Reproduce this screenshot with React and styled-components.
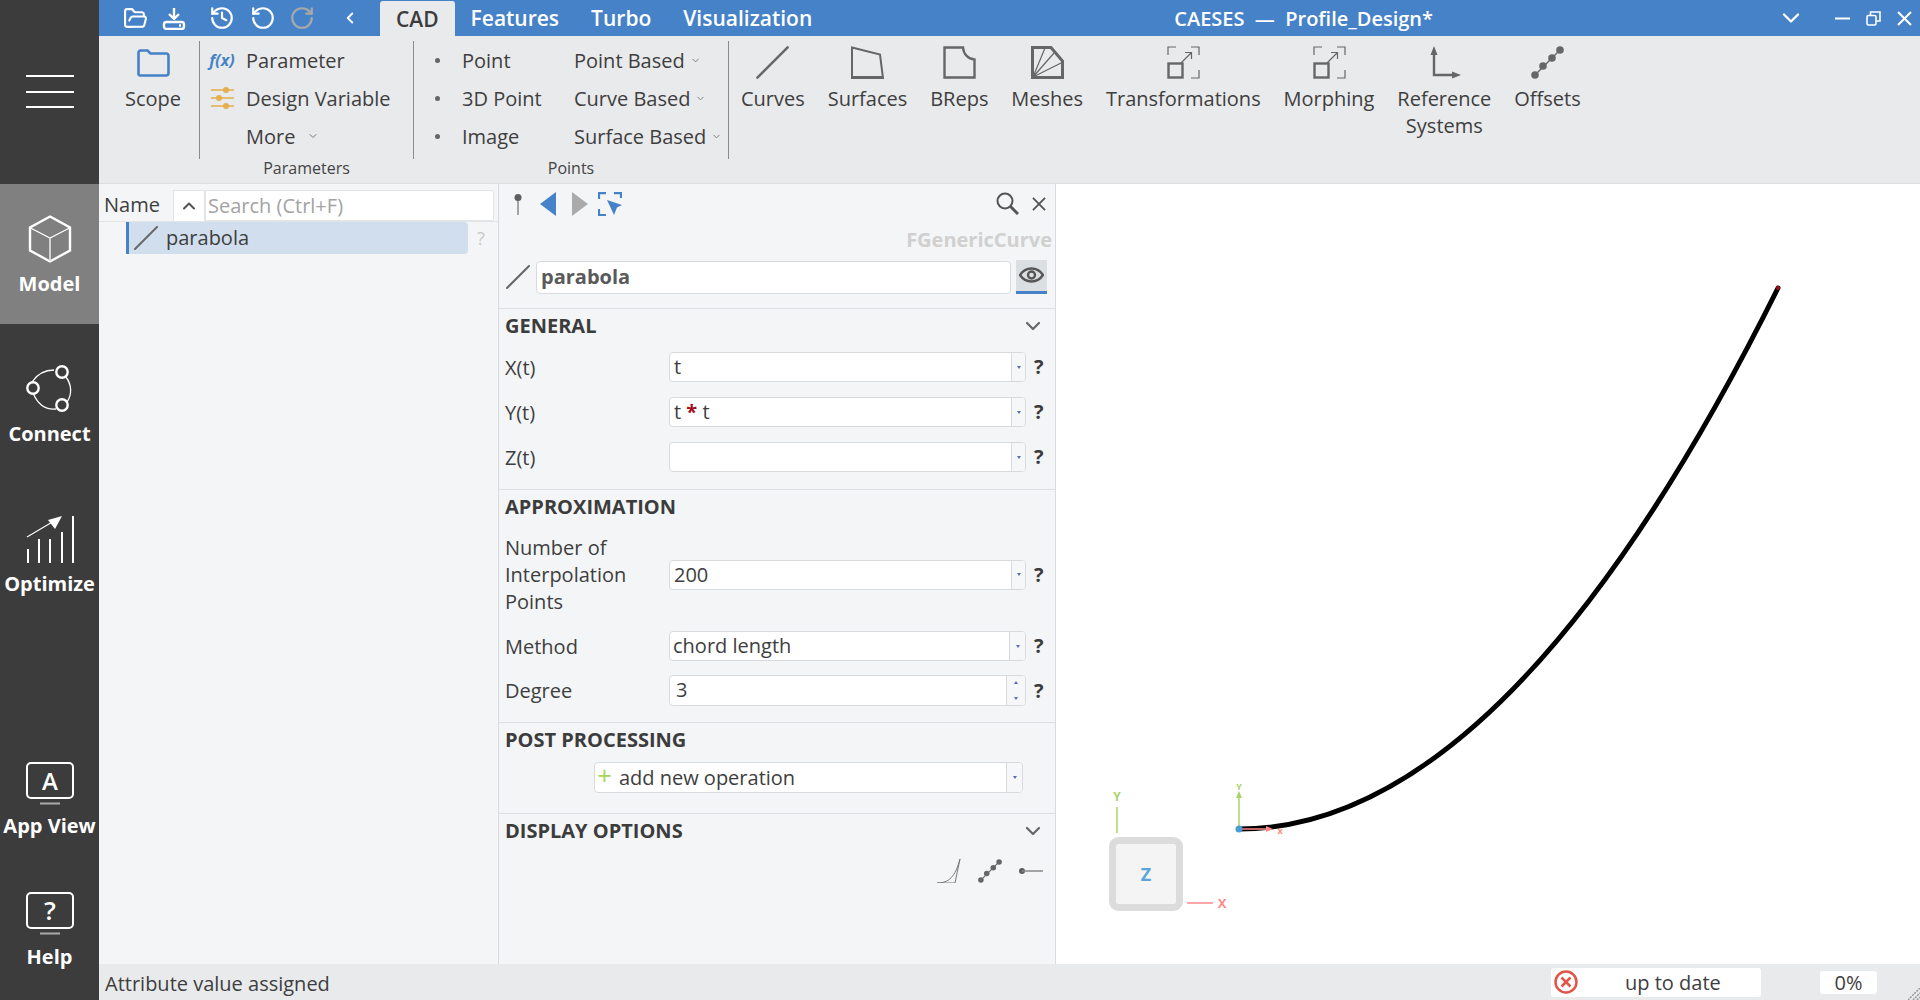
import React from "react";
import styled, { createGlobalStyle } from "styled-components";
import { FolderOpen, History, RotateCcw, RotateCw, ChevronLeft, ChevronDown, ChevronUp } from "lucide-react";

const GlobalStyle = createGlobalStyle`
  html, body {
    margin: 0;
    padding: 0;
    overflow: hidden;
  }
  * {
    box-sizing: border-box;
  }
  body {
    font-family: "Open Sans", "Liberation Sans", sans-serif;
    font-size: 20px;
    color: #3e3e3e;
  }
`;

const AppShell = styled.div`
  display: flex;
  width: 1920px;
  height: 1000px;
  overflow: hidden;
  background: #fff;
`;

/* left nav */
const Sidebar = styled.nav`
  display: flex;
  flex-direction: column;
  flex: none;
  width: 99px;
  height: 1000px;
  background: #3c3c3c;
  color: #fff;
`;

const MenuBox = styled.div`
  display: flex;
  flex-direction: column;
  align-items: center;
  gap: 13.5px;
  height: 184px;
  padding-top: 75px;
`;

const MenuLine = styled.span`
  width: 48px;
  height: 2px;
  background: #fff;
`;

const NavItem = styled.div`
  display: flex;
  flex-direction: column;
  align-items: center;
  height: ${(p) => p.$height}px;
  padding-top: ${(p) => p.$top || 0}px;
  background: ${(p) => (p.$active ? "#808080" : "transparent")};
`;

const NavLabel = styled.span`
  margin-top: ${(p) => p.$gap}px;
  font-size: 20px;
  font-weight: 700;
  line-height: 24px;
  white-space: nowrap;
`;

const NavBottom = styled.div`
  margin-top: auto;
`;

const ScreenSvg = styled.svg`
  overflow: visible;
`;

const ScreenGlyph = styled.text`
  font-family: "Open Sans", sans-serif;
  font-size: ${(p) => p.$size}px;
  font-weight: 600;
  fill: #fff;
  text-anchor: middle;
`;

/* main column */
const Main = styled.div`
  display: flex;
  flex-direction: column;
  flex: 1;
  min-width: 0;
`;

const TitleBar = styled.header`
  display: flex;
  align-items: flex-end;
  flex: none;
  height: 36px;
  background: #4682c8;
  color: #fff;
`;

const QuickTools = styled.div`
  display: flex;
  align-items: center;
  width: 281px;
  height: 36px;
  padding-left: 23px;
`;

const QuickSlot = styled.span`
  display: flex;
  justify-content: center;
  flex: none;
  width: ${(p) => p.$w}px;
  margin-right: ${(p) => p.$mr || 0}px;
  color: ${(p) => p.$color || "#fff"};
`;

const Tab = styled.div`
  height: ${(p) => (p.$active ? 35 : 36)}px;
  padding: 0 16px;
  border-radius: 3px 3px 0 0;
  background: ${(p) => (p.$active ? "#e9eaec" : "transparent")};
  color: ${(p) => (p.$active ? "#3c3c3c" : "#fff")};
  font-size: 21px;
  font-weight: 600;
  line-height: 36px;
`;

const AppTitle = styled.div`
  margin-left: 346px;
  font-size: 20px;
  font-weight: 600;
  line-height: 35px;
  white-space: pre;
`;

const WindowButtons = styled.div`
  display: flex;
  align-items: center;
  gap: 16px;
  height: 36px;
  margin-left: auto;
  padding-right: 8px;
`;

const Ribbon = styled.section`
  display: flex;
  flex: none;
  height: 148px;
  padding-top: 5px;
  background: #e9eaec;
  border-bottom: 1px solid #dcdee0;
`;

const ScopeGroup = styled.div`
  width: 100px;
  padding-left: 26px;
`;

const RibbonDivider = styled.div`
  flex: none;
  width: 1px;
  height: 118px;
  background: #8c8c8c;
`;

const RibbonGroup = styled.div`
  display: flex;
  flex-direction: column;
  flex: none;
  width: ${(p) => p.$width}px;
`;

const GroupBody = styled.div`
  display: grid;
  grid-template-columns: ${(p) => p.$cols};
  grid-auto-rows: 38px;
  height: 115px;
  padding-left: ${(p) => p.$left}px;
`;

const GroupTitle = styled.div`
  font-size: 16px;
  line-height: 24px;
  text-align: center;
  color: #444;
`;

const RibbonRow = styled.div`
  display: flex;
  align-items: center;
  font-size: 20px;
  white-space: nowrap;
`;

const RowIcon = styled.span`
  display: flex;
  justify-content: center;
  flex: none;
  width: 26px;
  margin-right: 11px;
`;

const FxMark = styled.span`
  color: #4682c8;
  font-size: 16px;
  font-style: italic;
  font-weight: 700;
`;

const Bullet = styled.span`
  flex: none;
  width: 5px;
  height: 5px;
  margin-right: 22px;
  border-radius: 50%;
  background: #666;
`;

const Caret = styled(ChevronDown)`
  flex: none;
  margin-left: ${(p) => p.$gap}px;
  color: #777;
`;

const ToolStrip = styled.div`
  display: flex;
  gap: 22.9px;
  padding-left: 12px;
`;

const ToolButton = styled.div`
  display: flex;
  flex-direction: column;
  align-items: center;
  width: max-content;
  padding-top: 5px;
  font-size: 20px;
  line-height: 27px;
  text-align: center;
  white-space: nowrap;
`;

const ToolIcon = styled.span`
  display: flex;
  align-items: center;
  height: 33px;
  margin-bottom: 6px;
`;

/* content */
const Content = styled.div`
  display: flex;
  flex: 1;
  min-height: 0;
`;

const TreePanel = styled.aside`
  flex: none;
  width: 399px;
  background: #f3f5f7;
`;

const TreeHeader = styled.div`
  display: flex;
  align-items: flex-end;
  height: 38px;
  border-bottom: 1px solid #e2e4e7;
`;

const NameCell = styled.span`
  width: 74px;
  padding-left: 5px;
  font-size: 20px;
  line-height: 33px;
`;

const SortButton = styled.span`
  display: flex;
  align-items: center;
  justify-content: center;
  width: 32px;
  height: 31px;
  background: #fff;
  border: 1px solid #e2e4e7;
  border-bottom: none;
  color: #555;
`;

const SearchBox = styled.div`
  width: 289px;
  height: 31px;
  padding-left: 2px;
  background: #fff;
  border: 1px solid #e2e4e7;
  border-radius: 0 3px 0 0;
  color: #a3a3a3;
  font-size: 20px;
  line-height: 29px;
`;

const TreeRow = styled.div`
  display: flex;
  align-items: center;
  gap: 8px;
  height: 32px;
  margin: 0 0 0 27px;
`;

const TreeItem = styled.div`
  display: flex;
  align-items: center;
  gap: 8px;
  width: 342px;
  height: 32px;
  padding-left: 5px;
  background: #d1deed;
  border-left: 3px solid #4682c8;
  border-radius: 0 4px 4px 0;
  font-size: 20px;
  line-height: 28px;
`;

const TreeHelp = styled.span`
  margin-left: 1px;
  color: #c9c9c9;
  font-size: 18px;
`;

const DetailPanel = styled.section`
  flex: none;
  width: 558px;
  background: #f3f5f7;
  border-left: 1px solid #d8dadd;
  border-right: 1px solid #d8dadd;
`;

const DetailTools = styled.div`
  display: flex;
  align-items: center;
  height: 40px;
  padding: 0 9px 1px 13px;
`;

const DetailSlot = styled.span`
  display: flex;
  flex: none;
  margin-right: ${(p) => p.$mr || 0}px;
  margin-left: ${(p) => (p.$push ? "auto" : 0)};
`;

const TypeName = styled.div`
  margin-top: 4px;
  padding-right: 3px;
  color: #d0d0d0;
  font-size: 20px;
  font-weight: 700;
  line-height: 24px;
  text-align: right;
`;

const NameRow = styled.div`
  display: flex;
  align-items: center;
  height: 34px;
  margin-top: 8px;
  padding-left: 7px;
`;

const NameInput = styled.div`
  flex: none;
  width: 475px;
  height: 33px;
  margin-left: 6px;
  padding-left: 4px;
  background: #fff;
  border: 1px solid #d8dadd;
  border-radius: 4px;
  color: #5a5a5a;
  font-size: 20px;
  font-weight: 700;
  line-height: 29px;
`;

const EyeButton = styled.span`
  display: flex;
  align-items: center;
  justify-content: center;
  width: 31px;
  height: 34px;
  margin-left: 5px;
  padding-bottom: 2px;
  background: #dcdfe2;
  border-bottom: 3px solid #4682c8;
`;

const Section = styled.div`
  margin-top: ${(p) => p.$gap || 0}px;
  padding: 5px 0 ${(p) => p.$bottom || 0}px;
  border-top: 1px solid #dcdee1;
`;

const SectionHead = styled.div`
  display: flex;
  align-items: center;
  justify-content: space-between;
  height: 24px;
  padding: 0 10px 0 6px;
  color: #3c3c3c;
  font-size: 20px;
  font-weight: 700;
  line-height: 22px;
`;

const FieldList = styled.div`
  display: flex;
  flex-direction: column;
  gap: 15px;
  margin-top: ${(p) => p.$top}px;
`;

const FieldRow = styled.div`
  display: grid;
  grid-template-columns: 164px 357px auto;
  align-items: center;
  margin-top: ${(p) => p.$shift || 0}px;
  padding-left: 6px;
`;

const FieldLabel = styled.span`
  font-size: 20px;
  line-height: 27px;
`;

const FieldBox = styled.div`
  display: flex;
  height: ${(p) => p.$height || 30}px;
  background: #fff;
  border: 1px solid #d8dadd;
  border-radius: 4px;
  font-size: 20px;
  line-height: ${(p) => (p.$height || 30) - 3}px;
`;

const FieldValue = styled.span`
  flex: 1;
  min-width: 0;
  padding-left: ${(p) => p.$left || 4}px;
  white-space: pre;
`;

const Operator = styled.span`
  color: #a01020;
  font-weight: 700;
`;

const Arrows = styled.span`
  display: flex;
  flex-direction: column;
  align-items: center;
  justify-content: ${(p) => (p.$spin ? "space-between" : "center")};
  flex: none;
  width: ${(p) => p.$width}px;
  padding: ${(p) => (p.$spin ? "5px 0" : 0)};
  background: #f6f7f8;
  border-left: 1px solid #d8dadd;
  border-radius: 0 3px 3px 0;
`;

const ArrowDown = styled.span`
  width: 0;
  height: 0;
  border-left: 2.5px solid transparent;
  border-right: 2.5px solid transparent;
  border-top: 3px solid #5b6ab8;
`;

const ArrowUp = styled(ArrowDown)`
  border-top: none;
  border-bottom: 3px solid #5b6ab8;
`;

const HelpMark = styled.span`
  margin-left: 8px;
  color: #3c3c3c;
  font-size: 20px;
  font-weight: 700;
  line-height: 24px;
`;

const AddRow = styled.div`
  width: 429px;
  margin: 10px 0 0 95px;
`;

const PlusMark = styled.span`
  margin-right: 7px;
  margin-left: -1px;
  color: #a4d65e;
  font-size: 26px;
  line-height: 24px;
`;

const DisplayIcons = styled.div`
  display: flex;
  align-items: center;
  justify-content: flex-end;
  gap: 17px;
  margin-top: 16px;
  padding-right: 12px;
`;

const Viewport = styled.div`
  flex: 1;
  min-width: 0;
  background: #fff;
`;

const CanvasSvg = styled.svg`
  display: block;
  width: 100%;
  height: 100%;
`;

const AxisText = styled.text`
  font-family: "Open Sans", sans-serif;
  font-weight: 700;
  font-size: ${(p) => p.$size}px;
  fill: ${(p) => p.$fill};
  text-anchor: middle;
`;

/* status bar */
const StatusBar = styled.footer`
  position: relative;
  display: flex;
  align-items: center;
  flex: none;
  height: 36px;
  padding-left: 6px;
  padding-top: 2px;
  background: #e9eaec;
  font-size: 20px;
`;

const StatusBox = styled.div`
  display: flex;
  align-items: center;
  width: 210px;
  height: 29px;
  margin-left: auto;
  margin-top: -2px;
  padding-left: 3px;
  background: #fff;
  border-radius: 3px;
`;

const StatusText = styled.span`
  margin-left: 47px;
`;

const PercentBox = styled.div`
  width: 57px;
  height: 23px;
  margin: -2px 43px 0 59px;
  background: #fff;
  border-radius: 3px;
  line-height: 23px;
  text-align: center;
`;

const Grip = styled.svg`
  position: absolute;
  right: 0;
  bottom: 0;
`;

const ic = { fill: "none", stroke: "#666" };

const LineIcon = ({ size = 24, width = 2 }) => (
  <svg width={size} height={size} viewBox="0 0 24 24">
    <path d="M1 23 23 1" stroke="#666" strokeWidth={width} strokeLinecap="round" />
  </svg>
);

const CrossIcon = ({ size, color, width = 2 }) => (
  <svg width={size} height={size} viewBox="0 0 15 15">
    <path d="M1 1 14 14M14 1 1 14" stroke={color} strokeWidth={width} />
  </svg>
);

const SaveIcon = () => (
  <svg width="24" height="23" viewBox="0 0 24 23" fill="none" stroke="#fff" strokeWidth="2.4">
    <path d="M12 1v10M7 7l5 5 5-5" strokeLinejoin="round" />
    <rect x="2" y="15" width="20" height="7" rx="2.5" />
    <path d="M17 18.5h2" />
  </svg>
);

const ScopeFolder = () => (
  <svg width="33" height="28" viewBox="0 0 33 28" fill="none" stroke="#4682c8" strokeWidth="2.6">
    <path d="M1.5 25V3.5a2 2 0 0 1 2-2h7l3 3h15.5a2.5 2.5 0 0 1 2.5 2.5V24a2.5 2.5 0 0 1-2.5 2.5H3a1.5 1.5 0 0 1-1.5-1.5Z" />
  </svg>
);

const SlidersIcon = () => (
  <svg width="25" height="24" viewBox="0 0 25 24" stroke="#e3b04b" strokeWidth="1.6" fill="#e3b04b">
    <path d="M1 4h23M1 12h23M1 20h23" />
    <circle cx="16" cy="4" r="2.2" />
    <circle cx="9" cy="12" r="2.2" />
    <circle cx="16" cy="20" r="2.2" />
  </svg>
);

const SurfaceIcon = () => (
  <svg width="33" height="33" viewBox="0 0 33 33" {...ic}>
    <path d="M1 1.5 29 8.5 32 32H1Z" strokeWidth="2" />
    <path d="M1 31.5H32" strokeWidth="3" />
  </svg>
);

const BrepIcon = () => (
  <svg width="33" height="33" viewBox="0 0 33 33" {...ic} strokeWidth="2.4">
    <path d="M1.5 1.5H20C20.5 8 25 13 31.5 13.5V31.5H1.5Z" />
  </svg>
);

const MeshIcon = () => (
  <svg width="33" height="33" viewBox="0 0 33 33" {...ic}>
    <path d="M1.5 1.5H20L31.5 15V31.5H1.5Z" strokeWidth="3" />
    <path d="M2 31 14 2M2 31 23 7M2 31 30 17" strokeWidth="1.2" />
  </svg>
);

const TransformIcon = () => (
  <svg width="33" height="33" viewBox="0 0 33 33" {...ic}>
    <path d="M1 9V1h8M24 1h8v8M32 24v8h-8" strokeWidth="1.2" />
    <rect x="1.5" y="17.5" width="14" height="14" strokeWidth="2.4" />
    <path d="M14 17 24 7M18 6.5h6.5V13" strokeWidth="1.2" />
  </svg>
);

const AxesIcon = () => (
  <svg width="33" height="33" viewBox="0 0 33 33">
    <path d="M6 5V29H27" {...ic} strokeWidth="2.4" />
    <path d="M6 0 9.5 9H2.5ZM33 29 24 32.5V25.5Z" fill="#666" />
  </svg>
);

const DotsIcon = ({ size = 33 }) => (
  <svg width={size} height={size} viewBox="0 0 33 33" fill="#666">
    <path d="M4 29 29 4" stroke="#666" strokeWidth="1.5" />
    <circle cx="4" cy="29" r="3.8" />
    <circle cx="12" cy="20" r="3.8" />
    <circle cx="21" cy="12" r="3.8" />
    <circle cx="29" cy="4" r="3.8" />
  </svg>
);

const PinIcon = () => (
  <svg width="12" height="22" viewBox="0 0 12 22">
    <path d="M6 6V22" stroke="#888" strokeWidth="1.5" />
    <circle cx="6" cy="4.5" r="3.5" fill="#5e5e5e" />
  </svg>
);

const TriangleIcon = ({ dir, color }) => (
  <svg width="17" height="24" viewBox="0 0 17 24">
    <path d={dir === "left" ? "M0 12 16 0V24Z" : "M1 0 17 12 1 24Z"} fill={color} />
  </svg>
);

const SelectFrameIcon = () => (
  <svg width="24" height="24" viewBox="0 0 24 24" fill="none" stroke="#4682c8" strokeWidth="2.2">
    <path d="M1 7V1.1H8M16 1.1H23V6M1 17V23H8" />
    <path d="M9 8 24 13 19 15.5 16 23Z" fill="#4682c8" stroke="none" />
  </svg>
);

const LensIcon = () => (
  <svg width="23" height="23" viewBox="0 0 23 23" fill="none" stroke="#555">
    <circle cx="9" cy="9" r="7.5" strokeWidth="2" />
    <path d="M14.5 14.5 22 22" strokeWidth="3" />
  </svg>
);

const EyeIcon = () => (
  <svg width="25" height="16" viewBox="0 0 25 16">
    <path d="M1 8C4 3.5 8 1.5 12.5 1.5S21 3.5 24 8C21 12.5 17 14.5 12.5 14.5S4 12.5 1 8Z" fill="none" stroke="#555" strokeWidth="2.4" />
    <circle cx="12.5" cy="8" r="3.5" fill="none" stroke="#555" strokeWidth="2.4" />
  </svg>
);

const CubeIcon = () => (
  <svg width="44" height="48" viewBox="0 0 44 48" fill="none" stroke="#fff">
    <path d="M22 1.5 42 12.5V35.5L22 46.5 2 35.5V12.5Z" strokeWidth="2.4" />
    <path d="M2.5 13 22 23 41.5 13" strokeWidth="1.2" />
    <path d="M22 23V46" stroke="#ddd" strokeWidth="1.8" />
  </svg>
);

const ConnectIcon = () => (
  <svg width="48" height="48" viewBox="0 0 48 48" fill="none" stroke="#fff">
    <path d="M6 17C12 8 20 5 28 5M40 12C46 20 46 30 41 37M30 44C20 45 12 40 7 28" strokeWidth="1.3" />
    <circle cx="7" cy="23" r="5.7" strokeWidth="2.4" />
    <circle cx="36" cy="7" r="5.7" strokeWidth="2.4" />
    <circle cx="36" cy="40" r="5.7" strokeWidth="2.4" />
  </svg>
);

const OptimizeIcon = () => (
  <svg width="48" height="48" viewBox="0 0 48 48" fill="none" stroke="#fff">
    <path d="M2 48V34M13 48V24M24 48V24M36 48V17M47 48V1" strokeWidth="2" />
    <path d="M1 22 28 6" strokeWidth="1.2" />
    <path d="M36 1 22 5 29 14Z" fill="#fff" stroke="none" />
  </svg>
);

const ScreenIcon = ({ children, size }) => (
  <ScreenSvg width="48" height="43" viewBox="0 0 48 43">
    <rect x="1" y="1" width="46" height="35" rx="4" fill="none" stroke="#fff" strokeWidth="2" />
    <path d="M14 41.5H34" stroke="#aaa" strokeWidth="2" />
    <ScreenGlyph x="24" y="28" $size={size}>{children}</ScreenGlyph>
  </ScreenSvg>
);

const CurveOptionIcon = () => (
  <svg width="24" height="24" viewBox="0 0 24 24" fill="none" stroke="#777" strokeWidth="1">
    <path d="M0 24C12 24 18 18 23 0L18 24H0" />
  </svg>
);

const StubIcon = () => (
  <svg width="24" height="12" viewBox="0 0 24 12">
    <circle cx="3" cy="6" r="3" fill="#5e5e5e" />
    <path d="M3 6H24" stroke="#888" strokeWidth="1.5" />
  </svg>
);

const ErrorIcon = () => (
  <svg width="24" height="24" viewBox="0 0 24 24" fill="none" stroke="#e0564a" strokeWidth="2.5">
    <circle cx="12" cy="12" r="10.5" />
    <path d="M7.5 7.5 16.5 16.5M16.5 7.5 7.5 16.5" />
  </svg>
);

const tools = [
  { label: "Curves", icon: <LineIcon size={33} width={1.8} /> },
  { label: "Surfaces", icon: <SurfaceIcon /> },
  { label: "BReps", icon: <BrepIcon /> },
  { label: "Meshes", icon: <MeshIcon /> },
  { label: "Transformations", icon: <TransformIcon /> },
  { label: "Morphing", icon: <TransformIcon /> },
  { label: "Reference", extra: "Systems", icon: <AxesIcon /> },
  { label: "Offsets", icon: <DotsIcon /> },
];

const Field = ({ label, value, arrowWidth = 14, left, shift }) => (
  <FieldRow $shift={shift}>
    <FieldLabel>{label}</FieldLabel>
    <FieldBox>
      <FieldValue $left={left}>{value}</FieldValue>
      <Arrows $width={arrowWidth}>
        <ArrowDown />
      </Arrows>
    </FieldBox>
    <HelpMark>?</HelpMark>
  </FieldRow>
);

// viewport is a canvas: coordinates are relative to its top left corner
const ViewportCanvas = () => (
  <CanvasSvg viewBox="0 0 864 780" preserveAspectRatio="xMinYMin">
    <path d="M183 645Q452.5 645 722 104" fill="none" stroke="#000" strokeWidth="5" strokeLinecap="round" />
    <circle cx="722" cy="104" r="2" fill="#a01010" />

    <rect x="56.5" y="656.5" width="67" height="67" rx="6" fill="#f4f4f4" stroke="#dcdcdc" strokeWidth="7" />
    <AxisText x="90" y="697" $size={18} $fill="#5ba4d8">Z</AxisText>
    <path d="M61 623V649" stroke="#a8d468" strokeWidth="1.5" />
    <AxisText x="61" y="617" $size={12} $fill="#a8d468">Y</AxisText>
    <path d="M131 719H157" stroke="#ff8a8a" strokeWidth="1.5" />
    <AxisText x="166" y="724" $size={13} $fill="#ff8a8a">X</AxisText>

    <path d="M183 645V612" stroke="#a8d468" strokeWidth="1.5" />
    <path d="M183 607 186 614H180Z" fill="#a8d468" />
    <AxisText x="183" y="606" $size={9} $fill="#a8d468">Y</AxisText>
    <path d="M183 645H212" stroke="#ff8a8a" strokeWidth="1.5" />
    <path d="M217 645 210 642V648Z" fill="#ff8a8a" />
    <AxisText x="224" y="650" $size={9} $fill="#ff8a8a">x</AxisText>
    <circle cx="183" cy="645" r="3.5" fill="#4b9bd5" />
  </CanvasSvg>
);

const App = () => (
  <AppShell>
    <GlobalStyle />
    <Sidebar>
      <MenuBox>
        <MenuLine />
        <MenuLine />
        <MenuLine />
      </MenuBox>
      <NavItem $active $height={140} $top={31}>
        <CubeIcon />
        <NavLabel $gap={9}>Model</NavLabel>
      </NavItem>
      <NavItem $height={150} $top={41}>
        <ConnectIcon />
        <NavLabel $gap={9}>Connect</NavLabel>
      </NavItem>
      <NavItem $height={130} $top={41}>
        <OptimizeIcon />
        <NavLabel $gap={9}>Optimize</NavLabel>
      </NavItem>
      <NavBottom>
        <NavItem $height={130}>
          <ScreenIcon size={24}>A</ScreenIcon>
          <NavLabel $gap={9}>App View</NavLabel>
        </NavItem>
        <NavItem $height={108}>
          <ScreenIcon size={26}>?</ScreenIcon>
          <NavLabel $gap={10}>Help</NavLabel>
        </NavItem>
      </NavBottom>
    </Sidebar>

    <Main>
      <TitleBar>
        <QuickTools>
          <QuickSlot $w={26} $mr={14}><FolderOpen size={25} strokeWidth={2} /></QuickSlot>
          <QuickSlot $w={24} $mr={23}><SaveIcon /></QuickSlot>
          <QuickSlot $w={26} $mr={15}><History size={26} strokeWidth={2} /></QuickSlot>
          <QuickSlot $w={26} $mr={13}><RotateCcw size={26} strokeWidth={2} /></QuickSlot>
          <QuickSlot $w={26} $mr={26} $color="#a9a9a9"><RotateCw size={26} strokeWidth={2} /></QuickSlot>
          <QuickSlot $w={18}><ChevronLeft size={20} strokeWidth={2.5} /></QuickSlot>
        </QuickTools>
        <Tab $active>CAD</Tab>
        <Tab>Features</Tab>
        <Tab>Turbo</Tab>
        <Tab>Visualization</Tab>
        <AppTitle>CAESES  —  Profile_Design*</AppTitle>
        <WindowButtons>
          <ChevronDown size={28} strokeWidth={2} />
          <svg width="15" height="15" viewBox="0 0 15 15" style={{ marginLeft: 14 }}>
            <path d="M0 7.5H15" stroke="#fff" strokeWidth="2" />
          </svg>
          <svg width="15" height="15" viewBox="0 0 15 15" fill="none" stroke="#fff" strokeWidth="1.6">
            <rect x="1" y="4.5" width="9" height="9.5" rx="1.5" />
            <path d="M4.5 4V1h9.5v9h-3.5" />
          </svg>
          <CrossIcon size={15} color="#fff" />
        </WindowButtons>
      </TitleBar>

      <Ribbon>
        <ScopeGroup>
          <ToolButton>
            <ToolIcon><ScopeFolder /></ToolIcon>
            Scope
          </ToolButton>
        </ScopeGroup>
        <RibbonDivider />
        <RibbonGroup $width={213}>
          <GroupBody $cols="1fr" $left={9}>
            <RibbonRow><RowIcon><FxMark>f(x)</FxMark></RowIcon>Parameter</RibbonRow>
            <RibbonRow><RowIcon><SlidersIcon /></RowIcon>Design Variable</RibbonRow>
            <RibbonRow><RowIcon />More<Caret size={12} $gap={12} /></RibbonRow>
          </GroupBody>
          <GroupTitle>Parameters</GroupTitle>
        </RibbonGroup>
        <RibbonDivider />
        <RibbonGroup $width={314}>
          <GroupBody $cols="139px 1fr" $left={21}>
            <RibbonRow><Bullet />Point</RibbonRow>
            <RibbonRow>Point Based<Caret size={11} $gap={5} /></RibbonRow>
            <RibbonRow><Bullet />3D Point</RibbonRow>
            <RibbonRow>Curve Based<Caret size={11} $gap={5} /></RibbonRow>
            <RibbonRow><Bullet />Image</RibbonRow>
            <RibbonRow>Surface Based<Caret size={11} $gap={5} /></RibbonRow>
          </GroupBody>
          <GroupTitle>Points</GroupTitle>
        </RibbonGroup>
        <RibbonDivider />
        <ToolStrip>
          {tools.map((tool) => (
            <ToolButton key={tool.label}>
              <ToolIcon>{tool.icon}</ToolIcon>
              {tool.label}
              {tool.extra ? <span>{tool.extra}</span> : null}
            </ToolButton>
          ))}
        </ToolStrip>
      </Ribbon>

      <Content>
        <TreePanel>
          <TreeHeader>
            <NameCell>Name</NameCell>
            <SortButton><ChevronUp size={20} strokeWidth={2.5} /></SortButton>
            <SearchBox>Search (Ctrl+F)</SearchBox>
          </TreeHeader>
          <TreeRow>
            <TreeItem>
              <LineIcon />
              parabola
            </TreeItem>
            <TreeHelp>?</TreeHelp>
          </TreeRow>
        </TreePanel>

        <DetailPanel>
          <DetailTools>
            <DetailSlot $mr={16}><PinIcon /></DetailSlot>
            <DetailSlot $mr={14}><TriangleIcon dir="left" color="#4682c8" /></DetailSlot>
            <DetailSlot $mr={10}><TriangleIcon dir="right" color="#aaa" /></DetailSlot>
            <DetailSlot><SelectFrameIcon /></DetailSlot>
            <DetailSlot $push $mr={13}><LensIcon /></DetailSlot>
            <DetailSlot><CrossIcon size={14} color="#555" /></DetailSlot>
          </DetailTools>
          <TypeName>FGenericCurve</TypeName>
          <NameRow>
            <LineIcon />
            <NameInput>parabola</NameInput>
            <EyeButton><EyeIcon /></EyeButton>
          </NameRow>
          <Section $gap={14} $bottom={17}>
            <SectionHead>GENERAL<ChevronDown size={24} color="#666" strokeWidth={2.2} /></SectionHead>
            <FieldList $top={14}>
              <Field label="X(t)" value="t" />
              <Field label="Y(t)" value={<>t <Operator>*</Operator> t</>} />
              <Field label="Z(t)" value="" />
            </FieldList>
          </Section>
          <Section $bottom={16}>
            <SectionHead>APPROXIMATION</SectionHead>
            <FieldList $top={15}>
              <Field label={<>Number of<br />Interpolation<br />Points</>} value="200" />
              <Field label="Method" value="chord length" arrowWidth={16} left={3} shift={1} />
              <FieldRow $shift={-1}>
                <FieldLabel>Degree</FieldLabel>
                <FieldBox $height={31}>
                  <FieldValue $left={6}>3</FieldValue>
                  <Arrows $width={19} $spin>
                    <ArrowUp />
                    <ArrowDown />
                  </Arrows>
                </FieldBox>
                <HelpMark>?</HelpMark>
              </FieldRow>
            </FieldList>
          </Section>
          <Section $bottom={20}>
            <SectionHead>POST PROCESSING</SectionHead>
            <AddRow>
              <FieldBox $height={31}>
                <FieldValue $left={3}><PlusMark>+</PlusMark>add new operation</FieldValue>
                <Arrows $width={16}>
                  <ArrowDown />
                </Arrows>
              </FieldBox>
            </AddRow>
          </Section>
          <Section>
            <SectionHead>DISPLAY OPTIONS<ChevronDown size={24} color="#666" strokeWidth={2.2} /></SectionHead>
            <DisplayIcons>
              <CurveOptionIcon />
              <DotsIcon size={24} />
              <StubIcon />
            </DisplayIcons>
          </Section>
        </DetailPanel>

        <Viewport>
          <ViewportCanvas />
        </Viewport>
      </Content>

      <StatusBar>
        Attribute value assigned
        <StatusBox>
          <ErrorIcon />
          <StatusText>up to date</StatusText>
        </StatusBox>
        <PercentBox>0%</PercentBox>
        <Grip width="12" height="12" viewBox="0 0 12 12" stroke="#999" strokeWidth="1.5" strokeDasharray="2 1">
          <path d="M0 12 12 0M5 12 12 5M9 12 12 9" />
        </Grip>
      </StatusBar>
    </Main>
  </AppShell>
);

export default App;
